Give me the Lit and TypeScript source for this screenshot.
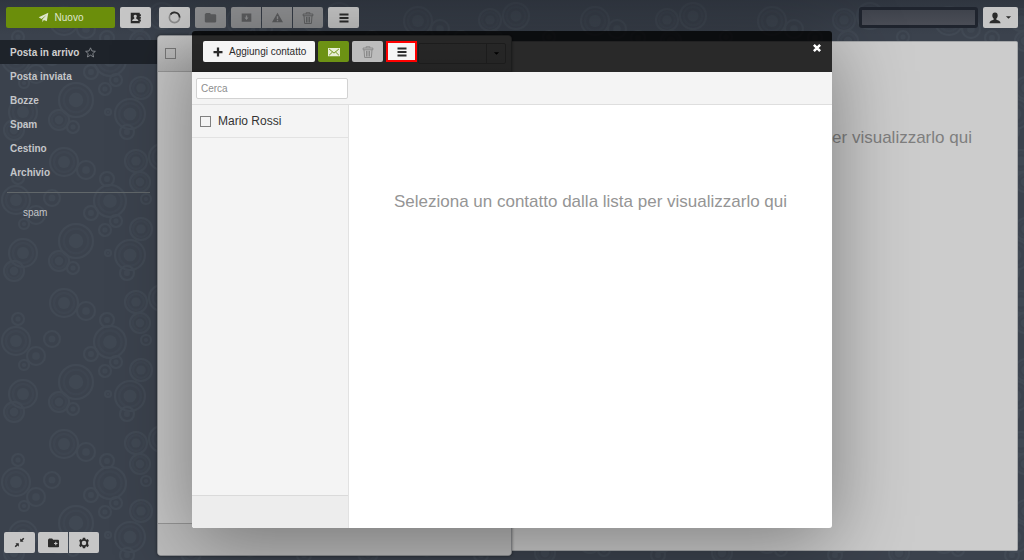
import { LitElement, html, css, svg } from "lit";
import { customElement, state } from "lit/decorators.js";
import { classMap } from "lit/directives/class-map.js";

const shapes: Record<string, unknown> = {
  plane: svg`<path d="M1 7.6 15 1l-2.2 12.4-4.3-1.9L6.4 15V10.600l6-6.300-7.400 5.700z"/>`,
  contact: svg`<path fill-rule="evenodd" d="M1 1h12v2h1.500v2.500H13v1h1.500V9H13v1h1.500v2.500H13V15H1zM7 3.500a2.200 2.200 0 0 0-1.200 4v1L3 10.500V12h8v-1.500L8.200 8.500v-1A2.200 2.200 0 0 0 7 3.500z"/>`,
  folder: svg`<path d="M1 4 2.500 2.500h5L8.500 4H14l1 1v8l-1 1H2l-1-1z"/>`,
  folderPlus: svg`<path fill-rule="evenodd" d="M0 4 1.500 2h4.500L7.500 4H15l1 1v9l-1 1H1l-1-1zM10.500 7v1.700H8.800v1.600h1.700V12h1.600v-1.700h1.700V8.700h-1.700V7z"/>`,
  archive: svg`<path fill-rule="evenodd" d="M1 2h14v12H1zM7 5v3H5l3 3.500L11 8H9V5z"/>`,
  warning: svg`<path fill-rule="evenodd" d="M8 1 16 15H0zM7 6v4.500h2V6zM7 11.700v1.800h2v-1.800z"/>`,
  trash: svg`<path fill="none" stroke="currentColor" stroke-width="1.200" d="M5.500 2.500v-1.500h5v1.500M1.500 2.700h13v2.300h-13zM2.700 5l.8 10.300h9L13.300 5M6 6.500v7.500M8 6.500v7.500M10 6.500v7.500"/>`,
  menu: svg`<path d="M2 2h12v2.600H2zM2 6.700h12v2.600H2zM2 11.400h12V14H2z"/>`,
  plus: svg`<path d="M6.500 2h3v4.500H14v3H9.500V14h-3V9.500H2v-3h4.500z"/>`,
  mail: svg`<path fill="#e8efd6" d="M0 2.500h16v11H0z"/><path fill="none" stroke="#6d9214" stroke-width="1.300" d="M1.500 4 8 9.500 14.500 4M1.500 12.300 6 8M14.500 12.300 10 8"/>`,
  cross: svg`<path fill="none" stroke="currentColor" stroke-width="4" d="M3 3l10 10M13 3 3 13"/>`,
  user: svg`<path d="M8 .5c2.500 0 3.600 1.600 3.600 4 0 1.800-.7 3.300-1.800 4.200v1.500c2.600.8 5.200 1.500 5.700 4.800H.5c.5-3.300 3.100-4 5.700-4.800V8.700C5.100 7.800 4.400 6.300 4.400 4.500c0-2.400 1.100-4 3.600-4z"/>`,
  shrink: svg`<path d="M15 2.500 13.500 1 10.700 3.800 9 2v5h5l-1.700-1.700zM1 13.500 2.500 15l2.800-2.800L7 14V9H2l1.700 1.700z"/>`,
  gear: svg`<path fill-rule="evenodd" d="M6.500 1h3l.5 2 1.300.6L13 2.500 14.500 5l-1 1.500v3l1 1.500-1.500 2.500-1.700-1.100-1.300.6-.5 2h-3L6 13l-1.300-.6L3 13.500 1.500 11l1-1.500v-3L1.500 5 3 2.500l1.700 1.100L6 3zM8 5a3 3 0 1 0 0 6 3 3 0 0 0 0-6z"/>`,
  spinner: svg`<circle cx="8" cy="8" r="6.300" fill="none" stroke="#8b8b8b" stroke-width="2"/><path fill="none" stroke="#2d2d2d" stroke-width="2" d="M3 4.200A6.300 6.300 0 0 1 14.300 8"/>`,
  star: svg`<path fill="none" stroke="currentColor" stroke-width="1.200" d="m8 1.200 2.100 4.600 5 .5-3.800 3.300 1.200 4.900L8 11.900l-4.500 2.600 1.200-4.900L.9 6.300l5-.5z"/>`,
  caret: svg`<path d="M2 5h12l-6 6z"/>`,
};

const icon = (name: string, size = 12) =>
  html`<svg width=${size} height=${size} viewBox="0 0 16 16" fill="currentColor" aria-hidden="true">${shapes[name]}</svg>`;

// Bubbles of one wallpaper tile: x, y, outer radius
const bubbles = [
  [64, 21, 14], [86, 29, 9], [18, 37, 6], [107, 38, 7], [136, 20, 11], [140, 41, 10],
  [16, 59, 14], [52, 57, 8], [110, 60, 16], [146, 58, 5], [36, 74, 9], [24, 83, 5],
  [91, 72, 7], [116, 80, 6], [105, 89, 6], [141, 88, 11], [76, 100, 17], [23, 112, 14],
  [59, 120, 10], [73, 127, 6], [130, 114, 15], [14, 130, 10], [108, 112, 3], [127, 132, 7],
  [162, 16, 13],
];

const base = css`
  :host { font-family: "Liberation Sans", Arial, sans-serif; font-size: 10px; }
  *, *::before { box-sizing: border-box; }
  svg { display: block; flex: none; }
  button {
    font: inherit; height: 21px; min-width: 31px; margin: 0; padding: 0 8px;
    display: flex; align-items: center; justify-content: center; gap: 5px;
    border: 0; border-radius: 2px; background: #c6c6c6; color: #2b2b2b;
  }
  button:disabled { background: #8e8f91; color: #5c5d5f; }
  .primary { background: #6b8e0b; color: #dfe6cd; }
  .group { display: flex; gap: 1px; }
  .group button { border-radius: 0; min-width: 30px; }
  .group button:first-child { border-radius: 2px 0 0 2px; }
  .group button:last-child { border-radius: 0 2px 2px 0; }
  .check {
    appearance: none; width: 11px; height: 11px; margin: 0; flex: none;
    border: 1px solid #777; background: transparent;
  }
`;

@customElement("contacts-dialog")
class ContactsDialog extends LitElement {
  static styles = [base, css`
    :host {
      display: flex; flex-direction: column; overflow: hidden; color: #333;
      border-radius: 3px; box-shadow: 0 14px 80px rgba(0, 0, 0, 0.4);
    }
    .head {
      flex: none; display: flex; align-items: center; gap: 3px; height: 41px;
      padding: 0 10px 0 11px; background: rgba(0, 0, 0, 0.8);
    }
    .head button { background: #f5f5f5; }
    .head .add { padding: 0 9px; gap: 5px; }
    .head .primary { background: #6d9214; }
    .head button:disabled { background: #bcbcbc; color: #858585; }
    .head .marked { border: 2px solid #f00; border-radius: 0; padding: 0; }
    .head .close { margin-left: auto; min-width: 0; padding: 0; background: none; color: #fff; height: 33px; align-self: flex-start; }
    .tools { flex: none; height: 33px; padding: 6px 4px; background: #f4f4f4; border-bottom: 1px solid #dedede; }
    .search {
      display: block; width: 152px; height: 21px; padding: 0 4px; font: inherit; color: #333;
      border: 1px solid #d2d2d2; border-radius: 2px; background: #fff;
    }
    .search::placeholder { color: #8e8e8e; opacity: 1; }
    .main { flex: 1; display: flex; min-height: 0; background: #fff; }
    .list { flex: none; width: 157px; display: flex; flex-direction: column; background: #f4f4f4; border-right: 1px solid #e2e2e2; }
    .row { display: flex; align-items: center; gap: 7px; height: 33px; padding: 0 8px; font-size: 12px; border-bottom: 1px solid #e2e2e2; }
    .row .check { border-color: #808080; }
    .foot { margin-top: auto; height: 33px; background: #ededed; border-top: 1px solid #dadada; }
    .empty { flex: 1; margin: 0; padding-top: 87px; text-align: center; font-size: 17px; line-height: 20px; color: #959595; }
  `];

  render() {
    return html`
      <header class="head">
        <button class="add">${icon("plus")}Aggiungi contatto</button>
        <button class="primary" aria-label="Scrivi">${icon("mail", 12)}</button>
        <button disabled aria-label="Elimina">${icon("trash", 12)}</button>
        <button class="marked" aria-label="Altro">${icon("menu")}</button>
        <button class="close" aria-label="Chiudi">${icon("cross", 10)}</button>
      </header>
      <div class="tools"><input class="search" type="search" placeholder="Cerca" aria-label="Cerca"></div>
      <div class="main">
        <div class="list">
          <label class="row"><input class="check" type="checkbox">Mario Rossi</label>
          <div class="foot"></div>
        </div>
        <p class="empty">Seleziona un contatto dalla lista per visualizzarlo qui</p>
      </div>`;
  }
}

@customElement("app-root")
class AppRoot extends LitElement {
  static styles = [base, css`
    :host { display: block; }
    .app {
      position: relative; height: 100vh; overflow: hidden; display: grid; background: #3b424d;
      grid-template: 35px minmax(0, 1fr) / 157px 355px minmax(0, 1fr);
    }
    .wall { position: absolute; inset: 0; width: 100%; height: 100%; }
    .ring { fill: none; stroke: #414954; stroke-width: 2; }
    .faint { stroke-opacity: 0.4; }
    .core { fill: #404853; }
    .top {
      position: relative; grid-column: 1 / -1; display: flex; align-items: flex-start; gap: 5px; padding: 7px 6px 0;
      background: linear-gradient(rgba(30, 35, 43, 0.4), rgba(30, 35, 43, 0));
    }
    .compose { width: 109px; gap: 6px; }
    .loading { margin-left: 3px; }
    .account { margin-left: auto; width: 119px; height: 21px; border: 3px solid #1f242e; border-radius: 3px; background: linear-gradient(#3f434c, #4a4d56); }
    .profile { width: 35px; gap: 4px; padding: 0; }
    .side { position: relative; display: flex; flex-direction: column; padding-top: 5px; }
    .link { display: flex; align-items: center; gap: 6px; height: 24px; padding: 0 10px; font-weight: bold; color: #c4c6c9; text-decoration: none; }
    .active { background: #1e232a; color: #cfcfcf; }
    .active svg { color: #92959a; }
    .line { width: 143px; height: 1px; margin: 8px 7px 7px; border: 0; background: #61676a; }
    .sub { padding-left: 23px; font-weight: normal; }
    .actions { margin-top: auto; display: flex; gap: 3px; padding: 0 4px 7px; }
    .mails {
      position: relative; z-index: 1; display: flex; flex-direction: column; margin-bottom: 4px; background: #c6c6c6;
      border: 1px solid #8d8f92; border-radius: 4px; box-shadow: 0 0 3px rgba(0, 0, 0, 0.5);
    }
    .mailhead {
      height: 36px; display: flex; align-items: center; justify-content: space-between; padding: 0 5px 0 7px;
      background: linear-gradient(#c4c4c4, #b0b0b0); border-bottom: 1px solid #969696; border-radius: 3px 3px 0 0;
    }
    .filter { display: flex; width: 88px; height: 21px; border: 1px solid #8c8c8c; border-radius: 2px; }
    .filter button { height: 19px; min-width: 19px; margin-left: auto; padding: 0; background: none; color: #000; border-left: 1px solid #8c8c8c; border-radius: 0; }
    .mailfoot { margin-top: auto; height: 32px; background: #bdbdbd; border-top: 1px solid #969696; border-radius: 0 0 3px 3px; }
    .preview { position: relative; margin: 6px 6px 9px 0; background: #ccc; border: 1px solid #a5a7a9; border-left: 0; border-radius: 0 2px 2px 0; }
    .hint { margin: 0; padding-top: 86px; text-align: center; font-size: 17px; line-height: 20px; color: #7f7f7f; white-space: nowrap; }
    .dialog { position: absolute; z-index: 2; top: 31px; bottom: 32px; left: 0; right: 0; margin: 0 auto; width: min(640px, 100%); }
  `];

  @state() private folder = "Posta in arrivo";

  private folders = ["Posta in arrivo", "Posta inviata", "Bozze", "Spam", "Cestino", "Archivio"];

  private link(name: string) {
    const active = name === this.folder;
    return html`<a class=${classMap({ link: true, active })} href="#" @click=${() => (this.folder = name)}>${name}${active ? icon("star", 11) : ""}</a>`;
  }

  render() {
    return html`
      <div class="app">
        <svg class="wall" aria-hidden="true">
          <defs>
            <pattern id="tile" width="177" height="141" patternUnits="userSpaceOnUse">
              ${bubbles.map(([x, y, r]) => svg`
                <circle class="ring" cx=${x} cy=${y} r=${r}></circle>
                ${r > 9 ? svg`<circle class="ring faint" cx=${x} cy=${y} r=${r * 0.72}></circle>` : ""}
                <circle class="core" cx=${x} cy=${y} r=${r * 0.42}></circle>`)}
            </pattern>
          </defs>
          <rect width="100%" height="100%" fill="url(#tile)"></rect>
        </svg>
        <header class="top">
          <button class="primary compose">${icon("plane", 11)}Nuovo</button>
          <button aria-label="Contatti">${icon("contact")}</button>
          <button class="loading" aria-label="Aggiorna">${icon("spinner", 13)}</button>
          <button disabled aria-label="Sposta">${icon("folder", 13)}</button>
          <div class="group">
            <button disabled aria-label="Archivia">${icon("archive", 11)}</button>
            <button disabled aria-label="Spam">${icon("warning", 11)}</button>
            <button disabled aria-label="Elimina">${icon("trash", 12)}</button>
          </div>
          <button aria-label="Altro">${icon("menu")}</button>
          <div class="account"></div>
          <button class="profile" aria-label="Profilo">${icon("user", 12)}${icon("caret", 7)}</button>
        </header>
        <nav class="side">
          ${this.folders.map((f) => this.link(f))}
          <hr class="line">
          <a class="link sub" href="#">spam</a>
          <div class="actions">
            <button aria-label="Riduci">${icon("shrink", 11)}</button>
            <div class="group">
              <button aria-label="Nuova cartella">${icon("folderPlus", 11)}</button>
              <button aria-label="Impostazioni">${icon("gear")}</button>
            </div>
          </div>
        </nav>
        <section class="mails">
          <div class="mailhead">
            <input class="check" type="checkbox" aria-label="Seleziona tutto">
            <div class="filter"><button aria-label="Filtra">${icon("caret", 7)}</button></div>
          </div>
          <div class="mailfoot"></div>
        </section>
        <main class="preview"><p class="hint">Seleziona un messaggio dalla lista per visualizzarlo qui</p></main>
        <contacts-dialog class="dialog" role="dialog" aria-label="Contatti"></contacts-dialog>
      </div>`;
  }
}
